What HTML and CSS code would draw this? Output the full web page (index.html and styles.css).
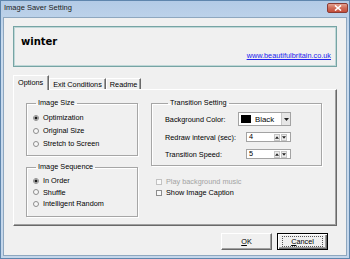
FILE: index.html
```html
<!DOCTYPE html>
<html lang="en">
<head>
    <meta charset="UTF-8">
    <meta name="viewport" content="width=device-width, initial-scale=1.0">
    <title>Image Saver Setting</title>
    <link rel="stylesheet" href="styles.css">
</head>
<body>
<div class="window">
    <div class="titlebar">
        <span class="title">Image Saver Setting</span>
        <span class="close-btn">
            <svg width="8" height="6" viewBox="0 0 8 6"><path d="M1 0.5 L7 5.5 M7 0.5 L1 5.5" stroke="#fff" stroke-width="1.6"/></svg>
        </span>
    </div>
    <div class="client">
        <div class="header">
            <div class="theme-name">winter</div>
            <a class="site-link" href="#">www.beautifulbritain.co.uk</a>
        </div>

        <div class="tabs">
            <div class="tab active">Options</div>
            <div class="tab">Exit Conditions</div>
            <div class="tab">Readme</div>
        </div>

        <div class="tab-panel">
            <div class="col-left">
                <fieldset class="group group-size">
                    <legend>Image Size</legend>
                    <div class="radio-row"><span class="radio checked"></span>Optimization</div>
                    <div class="radio-row"><span class="radio"></span>Original Size</div>
                    <div class="radio-row"><span class="radio"></span>Stretch to Screen</div>
                </fieldset>
                <fieldset class="group group-sequence">
                    <legend>Image Sequence</legend>
                    <div class="radio-row"><span class="radio checked"></span>In Order</div>
                    <div class="radio-row"><span class="radio"></span>Shuffle</div>
                    <div class="radio-row"><span class="radio"></span>Intelligent Random</div>
                </fieldset>
            </div>

            <div class="col-right">
                <fieldset class="group group-transition">
                    <legend>Transition Setting</legend>
                    <div class="field-row row-color">
                        <span class="field-label label-short">Background Color:</span>
                        <div class="combo">
                            <span class="swatch"></span>
                            <span class="combo-text">Black</span>
                            <span class="combo-arrow">
                                <svg width="5" height="3" viewBox="0 0 5 3"><path d="M0 0 H5 L2.5 3 Z" fill="#222"/></svg>
                            </span>
                        </div>
                    </div>
                    <div class="field-row row-redraw">
                        <span class="field-label label-long">Redraw interval (sec):</span>
                        <div class="spin">
                            <span class="spin-text">4</span>
                            <span class="spin-btns">
                                <span class="spin-btn"><svg width="5" height="3" viewBox="0 0 5 3"><path d="M0 3 H5 L2.5 0 Z" fill="#222"/></svg></span>
                                <span class="spin-btn"><svg width="5" height="3" viewBox="0 0 5 3"><path d="M0 0 H5 L2.5 3 Z" fill="#222"/></svg></span>
                            </span>
                        </div>
                    </div>
                    <div class="field-row row-speed">
                        <span class="field-label label-long">Transition Speed:</span>
                        <div class="spin">
                            <span class="spin-text">5</span>
                            <span class="spin-btns">
                                <span class="spin-btn"><svg width="5" height="3" viewBox="0 0 5 3"><path d="M0 3 H5 L2.5 0 Z" fill="#222"/></svg></span>
                                <span class="spin-btn"><svg width="5" height="3" viewBox="0 0 5 3"><path d="M0 0 H5 L2.5 3 Z" fill="#222"/></svg></span>
                            </span>
                        </div>
                    </div>
                </fieldset>

                <div class="check-row disabled first"><span class="checkbox"></span>Play background music</div>
                <div class="check-row"><span class="checkbox"></span>Show Image Caption</div>
            </div>
        </div>

        <div class="buttons">
            <div class="btn"><span><u>O</u>K</span></div>
            <div class="btn default"><span class="focus"><u>C</u>ancel</span></div>
        </div>
    </div>
</div>
</body>
</html>
```

FILE: styles.css
```css
* {
    box-sizing: border-box;
}

body {
    margin: 0;
    background: #fff;
    font-family: "Liberation Sans", Arial, sans-serif;
    font-size: 7.3px;
    color: #000;
}

.window {
    width: 350px;
    height: 259px;
    display: flex;
    flex-direction: column;
    background: linear-gradient(#b3cbe6, #c9dbee 40px, #c4d6ea);
    border: 1px solid #5f86ad;
}

.titlebar {
    height: 15px;
    display: flex;
    align-items: flex-start;
    justify-content: space-between;
    padding-left: 3px;
}

.title {
    line-height: 14px;
    font-size: 7.5px;
    color: #1c1c1c;
}

.close-btn {
    width: 21px;
    height: 10px;
    margin-top: 2px;
    margin-right: 1px;
    display: flex;
    align-items: center;
    justify-content: center;
    border: 1px solid #8b3b34;
    border-radius: 2px;
    background: linear-gradient(#e3a190, #cf6b57 50%, #c44d3b);
}

.client {
    flex: 1;
    margin: 1px 2px 2px 2px;
    border: 1px solid #8ea7bf;
    background: #f0f0f0;
    display: flex;
    flex-direction: column;
}

/* header with theme name */
.header {
    height: 41px;
    margin: 8px 9px 0 9px;
    padding: 8px 5px 6px 7px;
    border: 1px solid #76a4a4;
    box-shadow: inset 0 0 0 1px #bfd7d7;
    display: flex;
    flex-direction: column;
    justify-content: space-between;
}

.theme-name {
    font-family: "DejaVu Sans", sans-serif;
    font-weight: bold;
    font-size: 10px;
    line-height: 13px;
}

.site-link {
    align-self: flex-end;
    color: #2222ee;
    line-height: 9px;
}

/* tabs */
.tabs {
    display: flex;
    align-items: flex-end;
    margin: 8px 0 -1px 9px;
}

.tab {
    height: 12px;
    line-height: 11px;
    padding: 0 3px 0 3px;
    border-top: 1px solid #fff;
    border-left: 1px solid #fff;
    border-right: 1px solid #696969;
    box-shadow: inset -1px 0 0 #a0a0a0;
    white-space: nowrap;
}

.tab.active {
    height: 15px;
    line-height: 13px;
    padding: 0 5px 0 4px;
    background: #f0f0f0;
    position: relative;
    z-index: 1;
}

.tab-panel {
    height: 137px;
    margin: 0 9px 0 9px;
    padding: 9px 0 0 12px;
    border-top: 1px solid #fff;
    border-left: 1px solid #fff;
    border-right: 1px solid #696969;
    border-bottom: 1px solid #696969;
    box-shadow: inset -1px -1px 0 #a0a0a0;
    display: grid;
    grid-template-columns: 112px 171px;
    column-gap: 13px;
    align-items: start;
}

/* group boxes */
.group {
    margin: 0;
    border: 1px solid #a6a6a6;
    box-shadow: inset 1px 1px 0 #fff, 1px 1px 0 #fff;
    min-width: 0;
}

.group legend {
    padding: 0 2px;
    margin-left: 3px;
    line-height: 8px;
}

.group-size {
    padding: 4px 0 5px 6px;
}

.group-sequence {
    margin-top: 7px;
    padding: 4px 0 6px 6px;
}

.radio-row {
    display: flex;
    align-items: center;
    white-space: nowrap;
}

.group-size .radio-row {
    height: 13px;
}

.group-sequence .radio-row {
    height: 11.5px;
}

.radio {
    width: 6px;
    height: 6px;
    margin-right: 4px;
    border: 1px solid #8d8d8d;
    border-radius: 50%;
    background: #f7f7f7;
}

.radio.checked {
    background: radial-gradient(circle, #1a1a1a 0, #1a1a1a 1.3px, #f7f7f7 1.8px);
}

/* transition setting */
.group-transition {
    padding: 5px 0 6px 13px;
}

.field-row {
    display: flex;
    align-items: center;
    white-space: nowrap;
}

.row-color {
    height: 14px;
}

.row-redraw {
    height: 10px;
    margin-top: 6px;
}

.row-speed {
    height: 10px;
    margin-top: 7px;
}

.label-short {
    width: 73px;
}

.label-long {
    width: 81px;
}

.combo {
    width: 53px;
    height: 14px;
    display: flex;
    align-items: center;
    border: 1px solid #a3a3a3;
    background: #fff;
}

.swatch {
    width: 10px;
    height: 8px;
    margin-left: 2px;
    background: #000;
}

.combo-text {
    flex: 1;
    margin-left: 4px;
    font-size: 7.8px;
}

.combo-arrow {
    width: 9px;
    height: 12px;
    display: flex;
    align-items: center;
    justify-content: center;
    background: #e6e6e6;
    border-left: 1px solid #c8c8c8;
}

.spin {
    width: 45px;
    height: 10px;
    display: flex;
    align-items: center;
    border: 1px solid #a3a3a3;
    background: #fff;
}

.spin-text {
    flex: 1;
    margin-left: 2px;
    line-height: 8px;
}

.spin-btns {
    display: flex;
    gap: 1px;
    margin-right: 3px;
}

.spin-btn {
    width: 6px;
    height: 7px;
    display: flex;
    align-items: center;
    justify-content: center;
    background: #ececec;
    border: 1px solid #c6c6c6;
}

/* check boxes */
.check-row {
    height: 11px;
    padding-left: 5px;
    display: flex;
    align-items: center;
    white-space: nowrap;
}

.check-row.first {
    margin-top: 10px;
}

.checkbox {
    width: 6px;
    height: 6px;
    margin-right: 4px;
    border: 1px solid #8d8d8d;
    background: #f9f9f9;
}

.check-row.disabled {
    color: #a3a3a3;
}

.check-row.disabled .checkbox {
    border-color: #c2c2c2;
}

/* dialog buttons */
.buttons {
    display: flex;
    justify-content: flex-end;
    gap: 5px;
    margin: 7px 18px 0 0;
}

.btn {
    width: 51px;
    height: 17px;
    display: flex;
    align-items: center;
    justify-content: center;
    background: #f0f0f0;
    border-top: 1px solid #fff;
    border-left: 1px solid #fff;
    border-right: 1px solid #696969;
    border-bottom: 1px solid #696969;
    box-shadow: inset -1px -1px 0 #a0a0a0;
}

.btn.default {
    border: 1px solid #000;
    box-shadow: inset 1px 1px 0 #fff, inset -1px -1px 0 #696969, inset -2px -2px 0 #a0a0a0;
}

.btn .focus {
    width: 41px;
    height: 11px;
    line-height: 9px;
    text-align: center;
    border: 1px dotted #555;
}
```
